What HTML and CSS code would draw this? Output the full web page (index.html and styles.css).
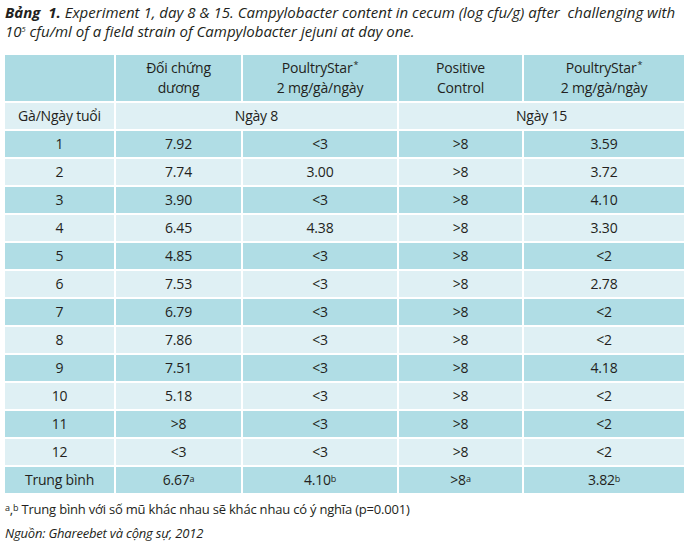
FILE: index.html
```html
<!DOCTYPE html>
<html lang="vi">
<head>
<meta charset="utf-8">
<title>Bảng 1</title>
<link rel="stylesheet" href="styles.css">
</head>
<body>
<div class="page">
  <p class="caption"><b>Bảng&nbsp;&nbsp;1.</b> Experiment 1, day 8 &amp; 15. Campylobacter content in cecum (log cfu/g) after&nbsp; challenging with<br>10<sup class="sup5">5</sup> cfu/ml of a field strain of Campylobacter jejuni at day one.</p>

  <div class="grid">
    <div class="cell head"></div>
    <div class="cell head"><span>Đối chứng<br>dương</span></div>
    <div class="cell head"><span>PoultryStar<sup class="star">*</sup><br>2 mg/gà/ngày</span></div>
    <div class="cell head"><span>Positive<br>Control</span></div>
    <div class="cell head"><span>PoultryStar<sup class="star">*</sup><br>2 mg/gà/ngày</span></div>

    <div class="cell light">Gà/Ngày tuổi</div>
    <div class="cell light span2">Ngày 8</div>
    <div class="cell light span2">Ngày 15</div>

    <div class="cell dark">1</div><div class="cell dark">7.92</div><div class="cell dark">&lt;3</div><div class="cell dark">&gt;8</div><div class="cell dark">3.59</div>
    <div class="cell light">2</div><div class="cell light">7.74</div><div class="cell light">3.00</div><div class="cell light">&gt;8</div><div class="cell light">3.72</div>
    <div class="cell dark">3</div><div class="cell dark">3.90</div><div class="cell dark">&lt;3</div><div class="cell dark">&gt;8</div><div class="cell dark">4.10</div>
    <div class="cell light">4</div><div class="cell light">6.45</div><div class="cell light">4.38</div><div class="cell light">&gt;8</div><div class="cell light">3.30</div>
    <div class="cell dark">5</div><div class="cell dark">4.85</div><div class="cell dark">&lt;3</div><div class="cell dark">&gt;8</div><div class="cell dark">&lt;2</div>
    <div class="cell light">6</div><div class="cell light">7.53</div><div class="cell light">&lt;3</div><div class="cell light">&gt;8</div><div class="cell light">2.78</div>
    <div class="cell dark">7</div><div class="cell dark">6.79</div><div class="cell dark">&lt;3</div><div class="cell dark">&gt;8</div><div class="cell dark">&lt;2</div>
    <div class="cell light">8</div><div class="cell light">7.86</div><div class="cell light">&lt;3</div><div class="cell light">&gt;8</div><div class="cell light">&lt;2</div>
    <div class="cell dark">9</div><div class="cell dark">7.51</div><div class="cell dark">&lt;3</div><div class="cell dark">&gt;8</div><div class="cell dark">4.18</div>
    <div class="cell light">10</div><div class="cell light">5.18</div><div class="cell light">&lt;3</div><div class="cell light">&gt;8</div><div class="cell light">&lt;2</div>
    <div class="cell dark">11</div><div class="cell dark">&gt;8</div><div class="cell dark">&lt;3</div><div class="cell dark">&gt;8</div><div class="cell dark">&lt;2</div>
    <div class="cell light">12</div><div class="cell light">&lt;3</div><div class="cell light">&lt;3</div><div class="cell light">&gt;8</div><div class="cell light">&lt;2</div>
    <div class="cell dark">Trung bình</div><div class="cell dark"><span>6.67<sup class="mark">a</sup></span></div><div class="cell dark"><span>4.10<sup class="mark">b</sup></span></div><div class="cell dark"><span>&gt;8<sup class="mark">a</sup></span></div><div class="cell dark"><span>3.82<sup class="mark">b</sup></span></div>
  </div>

  <p class="note"><sup class="mark">a</sup>,<sup class="mark">b</sup> Trung bình với số mũ khác nhau sẽ khác nhau có ý nghĩa (p=0.001)</p>
  <p class="source">Nguồn: Ghareebet và cộng sự, 2012</p>
</div>
</body>
</html>
```
FILE: styles.css
```css
html, body {
  margin: 0;
  padding: 0;
  background: #ffffff;
}

.page {
  padding: 3px 4px 0 5px;
  font-family: "Open Sans", "Noto Sans", sans-serif;
  color: #231f20;
}

.caption {
  margin: 0;
  font-size: 15px;
  line-height: 19px;
  font-style: italic;
  white-space: nowrap;
}

.caption b {
  font-weight: 700;
}

.sup5 {
  font-size: 7.5px;
  vertical-align: 5px;
  line-height: 0;
}

.grid {
  margin-top: 14px;
  display: grid;
  grid-template-columns: 109px 125px 154px 123px 160px;
  grid-auto-rows: 26px;
  grid-template-rows: 46px;
  gap: 2px;
  font-size: 14px;
  letter-spacing: -0.2px;
}

.cell {
  display: flex;
  align-items: center;
  justify-content: center;
  text-align: center;
  line-height: 20px;
}

.span2 {
  grid-column: span 2;
}

.head {
  background: #acdbe3;
}

.dark {
  background: #b0dde5;
}

.light {
  background: #dff0f4;
}

.star {
  font-size: 9px;
  line-height: 0;
  vertical-align: 5px;
  margin-left: 1px;
}

.mark {
  font-size: 9px;
  line-height: 0;
  vertical-align: 3px;
}

.note {
  margin: 7px 0 0;
  font-size: 13px;
  line-height: 18px;
  letter-spacing: -0.2px;
}

.source {
  margin: 6px 0 0;
  font-size: 13px;
  line-height: 18px;
  font-style: italic;
  letter-spacing: -0.2px;
}
```
